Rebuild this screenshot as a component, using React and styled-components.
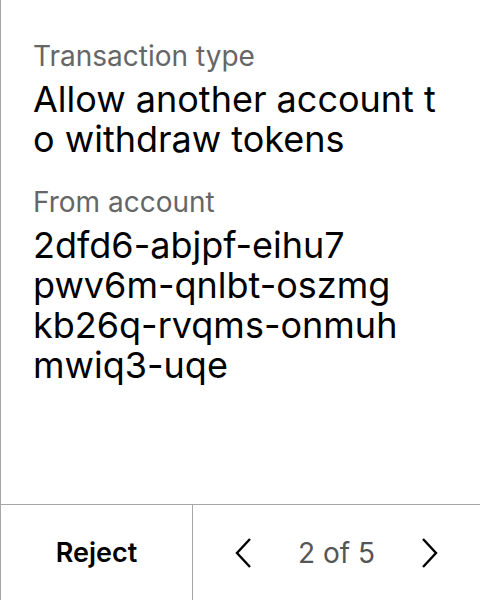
import React from 'react';
import styled, { createGlobalStyle } from 'styled-components';

const GlobalStyle = createGlobalStyle`
  html, body {
    margin: 0;
    padding: 0;
    background: #fff;
  }
  body {
    font-family: Inter, "Noto Sans", sans-serif;
    color: #000;
  }
`

const Frame = styled.div`
  height: 600px;
  display: flex;
  flex-direction: column;
  border-left: 1px solid #a6a6a6;
  box-sizing: border-box;
`

const Content = styled.div`
  flex: 1;
  padding: 39px 32px 0 32px;
  display: flex;
  flex-direction: column;
  gap: 26px;
`

const Field = styled.div`
  display: flex;
  flex-direction: column;
  gap: 6px;
`

const Label = styled.div`
  font-size: 28px;
  line-height: 34px;
  color: #666;
`

const Value = styled.div`
  font-size: 36px;
  line-height: 40px;
  color: #000;
  word-break: break-all;
`

const Line = styled.span`
  display: block;
`

const Footer = styled.div`
  height: 96px;
  display: grid;
  grid-template-columns: 192px 1fr;
  border-top: 1px solid #a6a6a6;
  box-sizing: border-box;
`

const RejectButton = styled.button`
  border: none;
  border-right: 1px solid #a6a6a6;
  background: none;
  font-family: Inter, sans-serif;
  font-size: 27px;
  font-weight: 600;
  color: #000;
  padding: 0;
  cursor: pointer;
`

const Pager = styled.div`
  display: flex;
  align-items: center;
  justify-content: center;
  gap: 47px;
`

const ArrowButton = styled.button`
  border: none;
  background: none;
  padding: 0;
  width: 16px;
  height: 30px;
  display: flex;
  cursor: pointer;
`

const Count = styled.span`
  font-size: 28px;
  color: #555;
`

const Chevron = ({ dir }) => (
  <svg width="16" height="30" viewBox="0 0 16 30">
    <polyline
      points={dir === 'left' ? '15,1 2,15 15,29' : '1,1 14,15 1,29'}
      fill="none"
      stroke="#000"
      strokeWidth="2.4"
    />
  </svg>
)

const account = ['2dfd6-abjpf-eihu7', 'pwv6m-qnlbt-oszmg', 'kb26q-rvqms-onmuh', 'mwiq3-uqe'];

const App = () => {
  return (
    <>
      <GlobalStyle />
      <Frame>
        <Content>
          <Field>
            <Label>Transaction type</Label>
            <Value>Allow another account to withdraw tokens</Value>
          </Field>
          <Field>
            <Label>From account</Label>
            <Value>
              {account.map(part => <Line key={part}>{part}</Line>)}
            </Value>
          </Field>
        </Content>
        <Footer>
          <RejectButton>Reject</RejectButton>
          <Pager>
            <ArrowButton><Chevron dir="left" /></ArrowButton>
            <Count>2 of 5</Count>
            <ArrowButton><Chevron dir="right" /></ArrowButton>
          </Pager>
        </Footer>
      </Frame>
    </>
  );
};

export default App;
